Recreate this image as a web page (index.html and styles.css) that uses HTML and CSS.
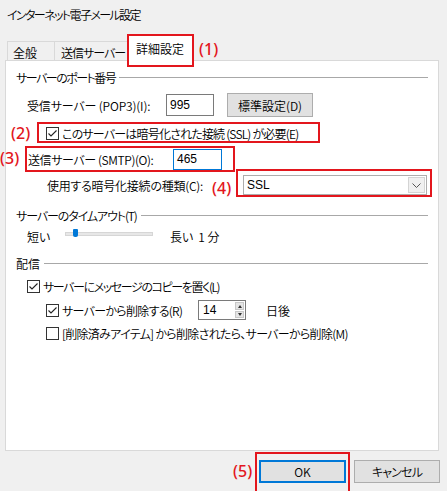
FILE: index.html
```html
<!DOCTYPE html>
<html lang="ja">
<head>
<meta charset="utf-8">
<title>インターネット電子メール設定</title>
<link rel="stylesheet" href="styles.css">
</head>
<body>
<div class="dialog">
  <div class="title">インターネット電子メール設定</div>
  <div class="tabs">
    <div class="tab t1">全般</div>
    <div class="tab t2">送信サーバー</div>
    <div class="tab active">詳細設定</div>
  </div>
  <div class="panel">
    <div class="group-h"><span class="h-port">サーバーのポート番号</span><i class="rule"></i></div>
    <div class="row pop3">
      <span class="lbl pop3-l">受信サーバー (POP3)(I):</span>
      <div class="field f-pop3">995</div>
      <div class="btn std">標準設定(D)</div>
    </div>
    <div class="row ssl">
      <span class="cb checked ind2"><svg viewBox="0 0 11 11" width="11" height="11"><polyline points="1.5,5.5 4,8 9.5,2.5" fill="none" stroke="#222" stroke-width="1.1"/></svg></span>
      <span class="cb-l ssl-l">このサーバーは暗号化された接続 (SSL) が必要(E)</span>
    </div>
    <div class="row smtp">
      <span class="lbl smtp-l">送信サーバー (SMTP)(O):</span>
      <div class="field f-smtp">465</div>
    </div>
    <div class="row enc">
      <span class="lbl enc-l">使用する暗号化接続の種類(C):</span>
      <div class="select"><span class="sel-v">SSL</span><span class="sel-btn"><svg viewBox="0 0 9 5" width="9" height="5"><polyline points="0.5,0.5 4.5,4.5 8.5,0.5" fill="none" stroke="#555" stroke-width="1"/></svg></span></div>
    </div>
    <div class="group-h g2"><span class="h-time">サーバーのタイムアウト(T)</span><i class="rule"></i></div>
    <div class="row slider">
      <span class="lbl short">短い</span>
      <div class="track"><i class="thumb"></i></div>
      <span class="long">長い</span>
      <span class="mins">1 分</span>
    </div>
    <div class="group-h g3"><span>配信</span><i class="rule"></i></div>
    <div class="row c1">
      <span class="cb checked ind1"><svg viewBox="0 0 11 11" width="11" height="11"><polyline points="1.5,5.5 4,8 9.5,2.5" fill="none" stroke="#222" stroke-width="1.1"/></svg></span>
      <span class="cb-l copy-l">サーバーにメッセージのコピーを置く(L)</span>
    </div>
    <div class="row c2">
      <span class="cb checked ind2"><svg viewBox="0 0 11 11" width="11" height="11"><polyline points="1.5,5.5 4,8 9.5,2.5" fill="none" stroke="#222" stroke-width="1.1"/></svg></span>
      <span class="cb-l del-l">サーバーから削除する(R)</span>
      <div class="field f-days"><span class="days-v">14</span><span class="spin"><i class="up"></i><i class="down"></i></span></div>
      <span class="days-u">日後</span>
    </div>
    <div class="row c3">
      <span class="cb ind2"></span>
      <span class="cb-l trash-l">[削除済みアイテム] から削除されたら、サーバーから削除(M)</span>
    </div>
  </div>
  <div class="footer">
    <div class="btn ok">OK</div>
    <div class="btn cancel">キャンセル</div>
  </div>

  <div class="mark box1"></div><span class="note n1">(1)</span>
  <div class="mark box2"></div><span class="note n2">(2)</span>
  <div class="mark box3"></div><span class="note n3">(3)</span>
  <div class="mark box4"></div><span class="note n4">(4)</span>
  <div class="mark box5"></div><span class="note n5">(5)</span>
</div>
</body>
</html>
```

FILE: styles.css
```css
* { box-sizing: border-box; }
html, body { margin: 0; padding: 0; }
body {
  width: 447px;
  height: 491px;
  overflow: hidden;
  background: #f0f0f0;
  font-family: "Noto Sans CJK JP", "Noto Sans", sans-serif;
  font-size: 12px;
  font-weight: 350;
  font-feature-settings: "palt";
  color: #000;
}
.dialog { position: relative; width: 447px; height: 491px; }
.title { height: 30px; line-height: 30px; padding-left: 7px; letter-spacing: -1.6px; }

.tabs { height: 30px; display: flex; align-items: flex-end; padding-left: 7px; position: relative; z-index: 2; }
.tab {
  height: 19px;
  border: 1px solid #d9d9d9;
  border-bottom: none;
  background: #f0f0f0;
  display: flex;
  align-items: center;
  padding-top: 2px;
  white-space: nowrap;
  overflow: hidden;
}
.t1 { width: 48px; padding-left: 5px; }
.t2 { width: 73px; padding-left: 6px; border-left: none; letter-spacing: -1px; }
.active {
  width: 65px;
  height: 26px;
  margin-bottom: -1px;
  background: #fff;
  padding-left: 8px;
  padding-top: 0;
  border-left: none;
}

.panel {
  margin-left: 5px;
  width: 434px;
  height: 391px;
  border: 1px solid #d9d9d9;
  background: #fff;
  padding: 7px 10px 0 10px;
  position: relative;
  z-index: 1;
}
.group-h { height: 18px; display: flex; align-items: center; gap: 4px; white-space: nowrap; }
.h-port { letter-spacing: -1.5px; }
.h-time { letter-spacing: -1.1px; }
.rule { flex: 1; height: 1px; background: #a8a8a8; }
.g2 { margin-top: 8px; }
.g3 { margin-top: 8px; }

.row { display: flex; align-items: center; white-space: nowrap; }
.lbl { display: inline-block; }
.pop3 { margin-top: 6px; height: 26px; }
.pop3-l { margin-left: 11px; width: 139px; letter-spacing: -0.15px; }
.field {
  height: 22px;
  border: 1px solid #7a7a7a;
  background: #fff;
  display: flex;
  align-items: center;
  padding-left: 3px;
  font-family: "Liberation Sans", sans-serif;
  font-weight: 400;
  font-size: 12px;
}
.f-pop3 { width: 48px; }
.btn {
  display: flex;
  align-items: center;
  justify-content: center;
  background: #e1e1e1;
  border: 1px solid #adadad;
}
.std { margin-left: 13px; width: 86px; height: 24px; }

.ssl { margin-top: 3px; height: 24px; }
.cb {
  width: 13px;
  height: 13px;
  border: 1px solid #333;
  background: #fff;
  display: flex;
  align-items: center;
  justify-content: center;
  flex: none;
}
.ind1 { margin-left: 11px; }
.ind2 { margin-left: 30px; }
.cb-l { margin-left: 3px; }
.ssl-l { letter-spacing: -0.8px; }
.copy-l { letter-spacing: -1.4px; }
.trash-l { letter-spacing: -0.7px; }

.smtp { margin-top: 2px; height: 24px; }
.smtp-l { margin-left: 12px; width: 145px; letter-spacing: -0.4px; }
.f-smtp { width: 49px; height: 21px; border-color: #0078d7; }

.enc { margin-top: 1px; height: 26px; }
.enc-l { margin-left: 31px; width: 196px; letter-spacing: -0.25px; }
.select {
  width: 184px;
  height: 20px;
  border: 1px solid #adadad;
  background: #fff;
  display: flex;
  align-items: center;
  justify-content: space-between;
  padding: 1px;
  font-family: "Liberation Sans", sans-serif;
  font-weight: 400;
}
.sel-v { padding-left: 2px; }
.sel-btn {
  width: 17px;
  height: 16px;
  border: 1px solid #d4d4d4;
  background: #f0f0f0;
  display: flex;
  align-items: center;
  justify-content: center;
}

.slider { margin-top: 2px; height: 20px; }
.short { margin-left: 11px; width: 38px; }
.track {
  position: relative;
  width: 88px;
  height: 4px;
  background: #e7e7e7;
  border: 1px solid #d6d6d6;
  margin-top: -4px;
}
.thumb {
  position: absolute;
  left: 7px;
  top: -4px;
  width: 5px;
  height: 8px;
  background: #0078d7;
  border-radius: 1px 1px 2px 2px;
}
.long { margin-left: 17px; }
.mins { margin-left: 5px; }

.c1 { margin-top: 4px; height: 20px; }
.c2 { margin-top: 3px; height: 22px; }
.del-l { width: 136px; letter-spacing: -0.7px; }
.f-days {
  width: 48px;
  height: 20px;
  padding-left: 4px;
  padding-right: 1px;
  justify-content: space-between;
}
.spin { width: 9px; height: 16px; display: flex; flex-direction: column; gap: 1px; }
.spin i {
  flex: 1;
  background: #e5e5e5;
  border: 1px solid #c8c8c8;
  position: relative;
}
.spin i::after {
  content: "";
  position: absolute;
  left: 1.5px;
  border-left: 2.5px solid transparent;
  border-right: 2.5px solid transparent;
}
.spin .up::after { top: 1.5px; border-bottom: 3px solid #333; }
.spin .down::after { top: 1.5px; border-top: 3px solid #333; }
.days-u { margin-left: 20px; }
.c3 { margin-top: 2px; height: 20px; }

.footer {
  display: flex;
  justify-content: flex-end;
  gap: 8px;
  padding-right: 7px;
  margin-top: 9px;
}
.ok { width: 87px; height: 23px; border: 2px solid #0078d7; }
.cancel { width: 86px; height: 23px; letter-spacing: -0.8px; }

.mark { position: absolute; border: 2px solid #e3161d; z-index: 5; }
.note {
  position: absolute;
  z-index: 5;
  color: #e3161d;
  font-family: "Noto Sans", sans-serif;
  font-size: 16px;
  font-weight: 500;
  line-height: 20px;
}
.box1 { left: 127px; top: 34px; width: 67px; height: 33px; }
.n1 { left: 199px; top: 39px; }
.box2 { left: 37px; top: 122px; width: 283px; height: 21px; }
.n2 { left: 11px; top: 123px; }
.box3 { left: 25px; top: 146px; width: 210px; height: 26px; }
.n3 { left: 0px; top: 148px; }
.box4 { left: 236px; top: 169px; width: 196px; height: 28px; }
.n4 { left: 212px; top: 178px; }
.box5 { left: 255px; top: 452px; width: 95px; height: 45px; }
.n5 { left: 233px; top: 461px; }
```
